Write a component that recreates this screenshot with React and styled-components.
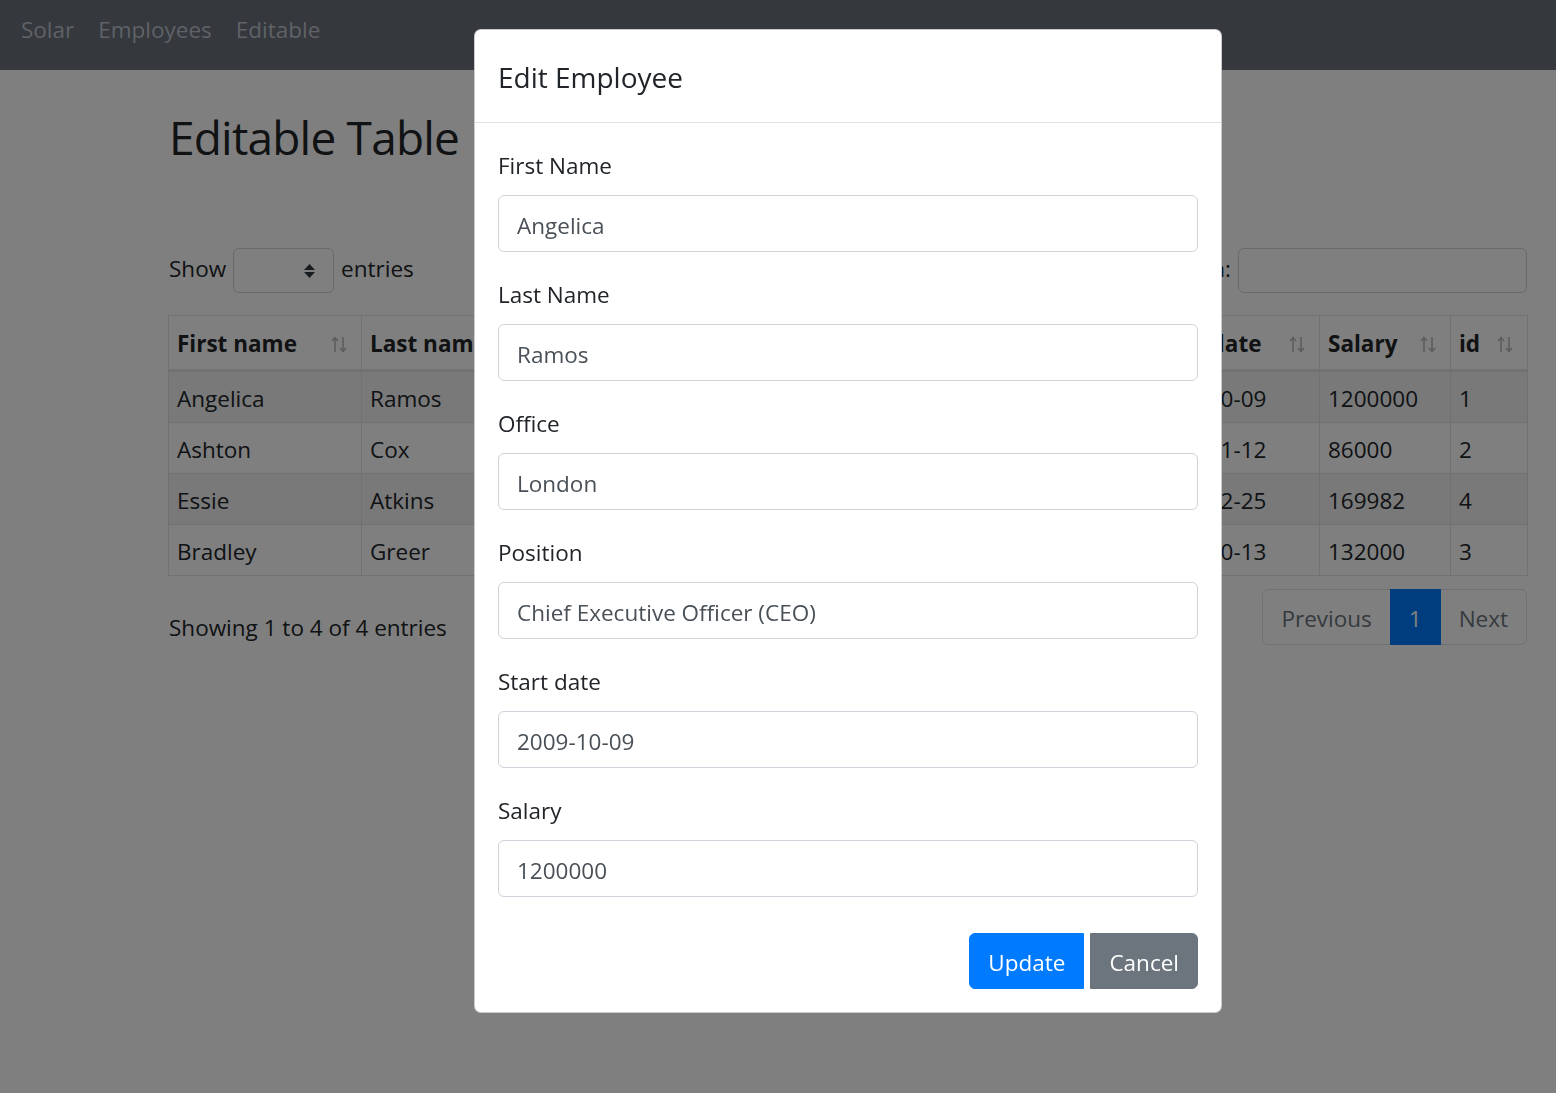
import React from 'react';
import styled, { createGlobalStyle } from 'styled-components';

const GlobalStyle = createGlobalStyle`
  html, body {
    margin: 0;
    padding: 0;
    background: #fff;
    font-family: 'Open Sans', 'Noto Sans', sans-serif;
    font-size: 22.5px;
    line-height: 36px;
    color: #212529;
    overflow: hidden;
  }
  * { box-sizing: border-box; }
`;

const employees = [
  { first: 'Angelica', last: 'Ramos', position: 'Chief Executive Officer (CEO)', office: 'London', start: '2009-10-09', salary: '1200000', id: 1 },
  { first: 'Ashton', last: 'Cox', position: 'Junior Technical Author', office: 'San Francisco', start: '2009-01-12', salary: '86000', id: 2 },
  { first: 'Essie', last: 'Atkins', position: 'Sales Assistant', office: 'Tokyo', start: '2012-12-25', salary: '169982', id: 4 },
  { first: 'Bradley', last: 'Greer', position: 'Software Engineer', office: 'London', start: '2012-10-13', salary: '132000', id: 3 },
];

const columns = [
  { label: 'First name', width: 193 },
  { label: 'Last name', width: 180 },
  { label: 'Position', width: 330 },
  { label: 'Office', width: 269 },
  { label: 'Start date', width: 179 },
  { label: 'Salary', width: 131 },
  { label: 'id', width: 77 },
];

const fields = [
  ['First Name', 'Angelica'],
  ['Last Name', 'Ramos'],
  ['Office', 'London'],
  ['Position', 'Chief Executive Officer (CEO)'],
  ['Start date', '2009-10-09'],
  ['Salary', '1200000'],
];

const Navbar = styled.nav`
  position: relative;
  z-index: 1050;
  height: 70px;
  background: #35383d;
  display: flex;
  align-items: center;
  gap: 24px;
  padding: 0 0 10px 21px;
`;

const NavLink = styled.a`
  color: #5f6267;
  text-decoration: none;
  font-size: 22.5px;
`;

const Container = styled.main`
  width: 1359px;
  margin-left: 168px;
`;

const Title = styled.h1`
  margin: 40px 0 0 1px;
  font-size: 46px;
  line-height: 55px;
  font-weight: 400;
  letter-spacing: -0.8px;
`;

const Controls = styled.div`
  margin-top: 83px;
  display: flex;
  justify-content: space-between;
  align-items: center;
  height: 45px;
`;

const Inline = styled.label`
  display: flex;
  align-items: center;
  gap: 7px;
  padding-left: 1px;
`;

const Word = styled.span`
  padding-bottom: 4px;
`;

const Select = styled.div`
  width: 101px;
  height: 45px;
  border: 1px solid #ced4da;
  border-radius: 6px;
  display: flex;
  align-items: center;
  justify-content: flex-end;
  padding-right: 18px;
`;

const SearchBox = styled.div`
  width: 289px;
  height: 45px;
  border: 1px solid #ced4da;
  border-radius: 6px;
  background: #fff;
`;

const Table = styled.table`
  margin-top: 22px;
  width: 1359px;
  table-layout: fixed;
  border-collapse: collapse;
`;

const Th = styled.th`
  text-align: left;
  font-weight: 700;
  padding: 10px 8px 7px 8px;
  border: 1px solid #dee2e6;
  border-bottom: 3px solid #dee2e6;
  white-space: nowrap;
  overflow: hidden;
`;

const ThInner = styled.div`
  display: flex;
  justify-content: space-between;
  align-items: center;
  padding-right: 6px;
`;

const Row = styled.tr`
  background: ${p => (p.$striped ? '#f2f2f2' : '#fff')};
`;

const Td = styled.td`
  padding: 9px 8px 5px;
  border: 1px solid #dee2e6;
  white-space: nowrap;
  overflow: hidden;
`;

const Footer = styled.div`
  margin-top: 13px;
  display: flex;
  justify-content: space-between;
  align-items: flex-start;
`;

const Info = styled.div`
  padding: 21px 0 0 1px;
`;

const Pagination = styled.ul`
  display: flex;
  list-style: none;
  margin: 0;
  padding: 0;
`;

const PageLink = styled.li`
  padding: 11px 18px 7px;
  line-height: 36px;
  border: 1px solid ${p => (p.$active ? '#007bff' : '#dee2e6')};
  margin-left: -1px;
  color: ${p => (p.$active ? '#fff' : '#6c757d')};
  background: ${p => (p.$active ? '#007bff' : '#fff')};
  position: relative;
  z-index: ${p => (p.$active ? 1 : 0)};
  &:first-child { border-radius: 6px 0 0 6px; margin-left: 0; }
  &:last-child { border-radius: 0 6px 6px 0; }
`;

const Backdrop = styled.div`
  position: fixed;
  inset: 0;
  background: rgba(0, 0, 0, 0.5);
  z-index: 1040;
`;

const ModalLayer = styled.div`
  position: fixed;
  inset: 0;
  z-index: 1060;
`;

const Dialog = styled.div`
  margin: 29px 0 0 474px;
  width: 748px;
  background: #fff;
  border: 1px solid rgba(0, 0, 0, 0.2);
  border-radius: 7px;
`;

const ModalHeader = styled.div`
  padding: 25px 23px 22px;
  border-bottom: 1px solid #dee2e6;
`;

const ModalTitle = styled.h5`
  margin: 0;
  font-size: 28px;
  line-height: 45px;
  font-weight: 400;
`;

const ModalBody = styled.div`
  padding: 24px 23px 23px;
`;

const Group = styled.div`
  margin-bottom: 24px;
`;

const Label = styled.label`
  display: block;
  padding-top: 2px;
  line-height: 34px;
  margin-bottom: 12px;
`;

const Input = styled.input`
  display: block;
  width: 100%;
  height: 57px;
  padding: 4px 18px 0;
  font: inherit;
  color: #495057;
  border: 1px solid #ced4da;
  border-radius: 6px;
  background: #fff;
  outline: none;
`;

const Actions = styled.div`
  margin-top: 36px;
  display: flex;
  justify-content: flex-end;
  gap: 6px;
`;

const Button = styled.button`
  font: inherit;
  line-height: 36px;
  padding: 11px 18px 7px;
  color: #fff;
  border: 1px solid ${p => p.$bg};
  background: ${p => p.$bg};
  border-radius: ${p => p.$radius};
`;

const SortIcon = () => (
  <svg width="16" height="17" viewBox="0 0 16 17" fill="none" stroke="#bdbdbd" strokeWidth="1.7">
    <path d="M4 16V2M1 5l3-3.5L7 5" />
    <path d="M12 1v14M9 12l3 3.5 3-3.5" />
  </svg>
);

const Caret = () => (
  <svg width="11" height="16" viewBox="0 0 11 16" fill="#343a40">
    <path d="M5.5 1L11 7H0z" />
    <path d="M0 9h11l-5.5 6z" />
  </svg>
);

export default function App() {
  return (
    <>
      <GlobalStyle />
      <Navbar>
        <NavLink>Solar</NavLink>
        <NavLink>Employees</NavLink>
        <NavLink>Editable</NavLink>
      </Navbar>
      <Container>
        <Title>Editable Table</Title>
        <Controls>
          <Inline>
            <Word>Show</Word>
            <Select><Caret /></Select>
            <Word>entries</Word>
          </Inline>
          <Inline>
            <Word>Search:</Word>
            <SearchBox />
          </Inline>
        </Controls>
        <Table>
          <colgroup>
            {columns.map(c => <col key={c.label} style={{ width: c.width }} />)}
          </colgroup>
          <thead>
            <tr>
              {columns.map(c => (
                <Th key={c.label}>
                  <ThInner>
                    <span>{c.label}</span>
                    <SortIcon />
                  </ThInner>
                </Th>
              ))}
            </tr>
          </thead>
          <tbody>
            {employees.map((e, i) => (
              <Row key={e.id} $striped={i % 2 === 0}>
                <Td>{e.first}</Td>
                <Td>{e.last}</Td>
                <Td>{e.position}</Td>
                <Td>{e.office}</Td>
                <Td>{e.start}</Td>
                <Td>{e.salary}</Td>
                <Td>{e.id}</Td>
              </Row>
            ))}
          </tbody>
        </Table>
        <Footer>
          <Info>Showing 1 to 4 of 4 entries</Info>
          <Pagination>
            <PageLink>Previous</PageLink>
            <PageLink $active>1</PageLink>
            <PageLink>Next</PageLink>
          </Pagination>
        </Footer>
      </Container>
      <Backdrop />
      <ModalLayer>
        <Dialog>
          <ModalHeader>
            <ModalTitle>Edit Employee</ModalTitle>
          </ModalHeader>
          <ModalBody>
            {fields.map(([label, value]) => (
              <Group key={label}>
                <Label>{label}</Label>
                <Input defaultValue={value} />
              </Group>
            ))}
            <Actions>
              <Button $bg="#007bff" $radius="6px 0 0 6px">Update</Button>
              <Button $bg="#6c757d" $radius="0 6px 6px 0">Cancel</Button>
            </Actions>
          </ModalBody>
        </Dialog>
      </ModalLayer>
    </>
  );
}
